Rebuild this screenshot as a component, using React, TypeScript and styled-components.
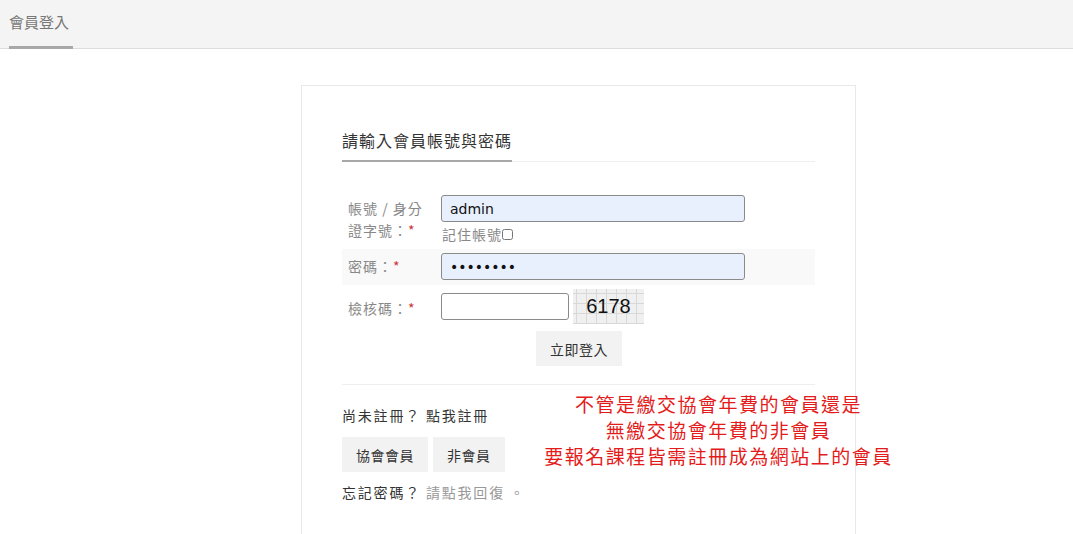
import styled, { createGlobalStyle } from "styled-components";

const GlobalStyle = createGlobalStyle`
  html, body {
    margin: 0;
    padding: 0;
    background: #fff;
    font-family: "Liberation Sans", "Noto Sans CJK TC", sans-serif;
    color: #333;
  }
  * {
    box-sizing: border-box;
  }
`;

function App() {
  return (
    <>
      <GlobalStyle />
      <TopBar>
        <TopTab>會員登入</TopTab>
      </TopBar>
      <Card>
        <Heading>
          <HeadingText>請輸入會員帳號與密碼</HeadingText>
        </Heading>
        <Form>
          <Row>
            <Label>
              帳號 / 身分
              <br />
              證字號：<Star>*</Star>
            </Label>
            <Field>
              <TextInput defaultValue="admin" $filled />
              <Remember>
                記住帳號
                <Check type="checkbox" />
              </Remember>
            </Field>
          </Row>
          <Row $shaded>
            <Label>
              密碼：<Star>*</Star>
            </Label>
            <Field>
              <TextInput type="password" defaultValue="password" $filled />
            </Field>
          </Row>
          <Row $center>
            <Label>
              檢核碼：<Star>*</Star>
            </Label>
            <CaptchaField>
              <TextInput $short />
              <Captcha>6178</Captcha>
            </CaptchaField>
          </Row>
          <SubmitWrap>
            <GrayButton>立即登入</GrayButton>
          </SubmitWrap>
        </Form>
        <Divider />
        <Bottom>
          <Links>
            <Line>尚未註冊？ 點我註冊</Line>
            <ButtonRow>
              <GrayButton>協會會員</GrayButton>
              <GrayButton>非會員</GrayButton>
            </ButtonRow>
            <Line>
              忘記密碼？ <Muted>請點我回復 。</Muted>
            </Line>
          </Links>
          <Notice>
            不管是繳交協會年費的會員還是
            <br />
            無繳交協會年費的非會員
            <br />
            要報名課程皆需註冊成為網站上的會員
          </Notice>
        </Bottom>
      </Card>
    </>
  );
}

const TopBar = styled.div`
  height: 49px;
  background: #f4f4f4;
  border-bottom: 1px solid #ddd;
  padding-left: 9px;
  display: flex;
  align-items: flex-end;
`;

const TopTab = styled.div`
  height: 48px;
  padding-top: 10px;
  border-bottom: 3px solid #a8a8a8;
  margin-bottom: -1px;
  font-size: 15px;
  color: #777;
  width: 64px;
  font-family: "Noto Sans CJK TC", sans-serif;
`;

const Card = styled.div`
  margin: 36px 0 0 301px;
  width: 555px;
  height: 460px;
  border: 1px solid #e8e8e8;
  padding: 42px 40px 0 40px;
  font-family: "Noto Sans CJK TC", sans-serif;
`;

const Heading = styled.div`
  border-bottom: 1px solid #eee;
  display: flex;
`;

const HeadingText = styled.div`
  font-size: 16px;
  line-height: 24px;
  padding-bottom: 8px;
  border-bottom: 2px solid #a8a8a8;
  margin-bottom: -1px;
  color: #333;
  width: 170px;
  letter-spacing: 1px;
  white-space: nowrap;
`;

const Form = styled.div`
  padding-top: 29px;
  display: flex;
  flex-direction: column;
`;

const Row = styled.div<{ $shaded?: boolean; $center?: boolean }>`
  display: flex;
  align-items: ${(p) => (p.$center ? "center" : "flex-start")};
  padding: 4px 0 4px 6px;
  background: ${(p) => (p.$shaded ? "#f9f9f9" : "transparent")};
  min-height: 36px;
`;

const Label = styled.div`
  width: 93px;
  flex: none;
  font-size: 14px;
  line-height: 22px;
  color: #888;
  padding-top: 2px;
  letter-spacing: 1px;
`;

const Star = styled.span`
  color: #c33;
`;

const Field = styled.div`
  display: flex;
  flex-direction: column;
`;

const CaptchaField = styled.div`
  display: flex;
  align-items: center;
  gap: 4px;
`;

const TextInput = styled.input<{ $filled?: boolean; $short?: boolean }>`
  width: ${(p) => (p.$short ? "128px" : "304px")};
  height: 27px;
  border: 1px solid #8a8a8a;
  border-radius: 3px;
  background: ${(p) => (p.$filled ? "#e8f0fe" : "#fff")};
  padding: 0 8px;
  font-family: "DejaVu Sans", sans-serif;
  font-size: 14px;
  color: #111;
  outline: none;
`;

const Remember = styled.label`
  display: flex;
  align-items: center;
  font-size: 14px;
  color: #888;
  line-height: 22px;
  margin: 1px 0 0 1px;
  letter-spacing: 1px;
`;

const Check = styled.input`
  width: 11px;
  height: 11px;
  margin: 0;
`;

const Captcha = styled.div`
  width: 71px;
  height: 35px;
  background-color: #f0f0f0;
  background-image: linear-gradient(to right, #d8d8d8 1px, transparent 1px),
    linear-gradient(to bottom, #d8d8d8 1px, transparent 1px);
  background-size: 10px 10px;
  background-position: 3px 4px;
  font-family: "Liberation Sans", sans-serif;
  font-size: 20px;
  color: #111;
  display: flex;
  align-items: center;
  justify-content: center;
`;

const SubmitWrap = styled.div`
  display: flex;
  padding-left: 194px;
  margin-top: 3px;
`;

const GrayButton = styled.button`
  background: #f2f2f2;
  border: none;
  height: 35px;
  padding: 0 14px;
  font-family: "Noto Sans CJK TC", sans-serif;
  font-size: 14px;
  color: #333;
  letter-spacing: 0.5px;
`;

const Divider = styled.div`
  border-top: 1px solid #eee;
  margin-top: 18px;
`;

const Bottom = styled.div`
  display: flex;
  padding-top: 10px;
`;

const Links = styled.div`
  display: flex;
  flex-direction: column;
  width: 200px;
  flex: none;
`;

const Line = styled.div`
  font-size: 14px;
  line-height: 22px;
  color: #333;
  letter-spacing: 1.8px;
  margin-top: 9px;
  white-space: nowrap;
`;

const Muted = styled.span`
  color: #999;
`;

const ButtonRow = styled.div`
  display: flex;
  gap: 5px;
  margin-top: 11px;
`;

const Notice = styled.div`
  flex: 1;
  text-align: center;
  color: #e41b1b;
  font-size: 19px;
  line-height: 26px;
  letter-spacing: 1.5px;
  margin: -4px -80px 0 0;
  white-space: nowrap;
`;

export default App;
